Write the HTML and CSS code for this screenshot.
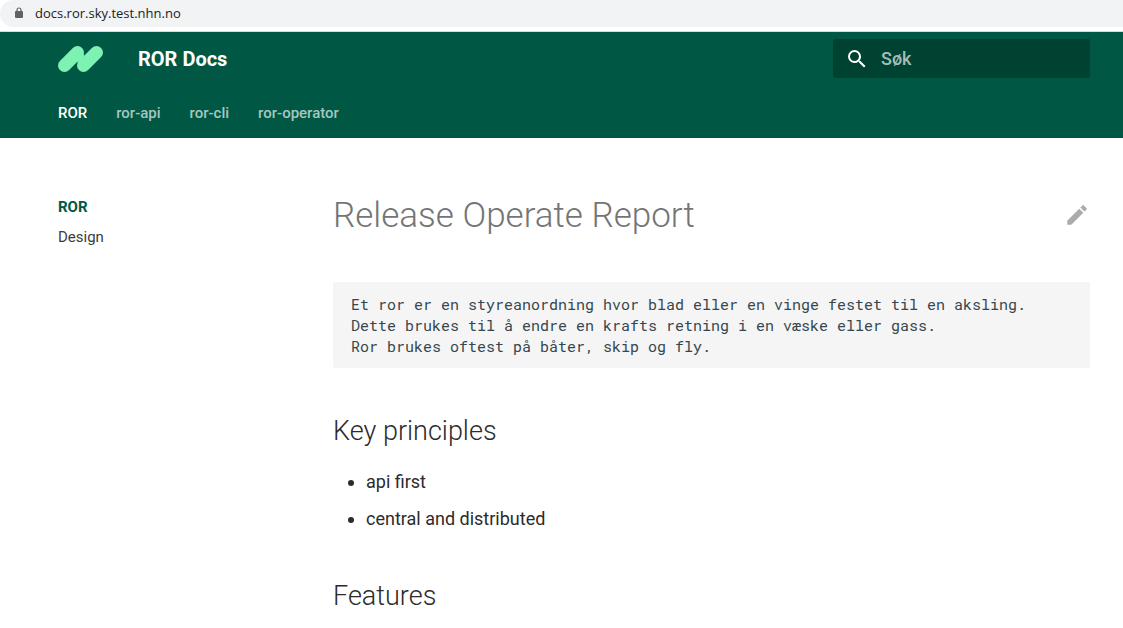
FILE: index.html
```html
<!DOCTYPE html>
<html lang="no">
<head>
<meta charset="utf-8">
<meta name="viewport" content="width=device-width, initial-scale=1">
<title>ROR Docs</title>
<link rel="stylesheet" href="styles.css">
</head>
<body>
<div class="browser-bar">
  <div class="address">
    <svg class="lock" viewBox="0 0 8 12" aria-hidden="true"><rect y="4" width="8" height="7" rx="1" fill="#5f6368"/><path d="M2 5V3a2 2 0 0 1 4 0v2" fill="none" stroke="#5f6368" stroke-width="1.2"/></svg>
    <span>docs.ror.sky.test.nhn.no</span>
  </div>
</div>
<header class="header">
  <div class="header-row">
    <a class="logo" href="#" aria-label="ROR Docs">
      <svg viewBox="0 0 45 28" aria-hidden="true"><path d="M6.500 20.500 19.500 7.500M25.500 20.500 38.500 7.500" fill="none" stroke="#7df2b2" stroke-width="13" stroke-linecap="round"/><path d="M26.200 9 25 15l-6 2.500 1-7.500z" fill="#7df2b2"/></svg>
    </a>
    <span class="site-title">ROR Docs</span>
    <form class="search" role="search">
      <svg class="search-icon" viewBox="0 0 24 24" aria-hidden="true"><path fill="#fff" d="M9.500 3A6.500 6.500 0 0 1 16 9.500c0 1.610-.590 3.090-1.560 4.230l.270.270h.790l5 5-1.500 1.500-5-5v-.790l-.270-.270A6.516 6.516 0 0 1 9.500 16 6.500 6.500 0 0 1 3 9.500 6.500 6.500 0 0 1 9.500 3m0 2C7 5 5 7 5 9.500S7 14 9.500 14 14 12 14 9.500 12 5 9.500 5Z"/></svg>
      <input class="search-input" type="text" placeholder="Søk" aria-label="Søk">
    </form>
  </div>
  <nav class="tabs" aria-label="Tabs">
    <a class="tab tab-active" href="#">ROR</a>
    <a class="tab" href="#">ror-api</a>
    <a class="tab" href="#">ror-cli</a>
    <a class="tab" href="#">ror-operator</a>
  </nav>
</header>
<div class="layout">
  <nav class="sidebar" aria-label="ROR">
    <a class="side-link side-active" href="#">ROR</a>
    <a class="side-link" href="#">Design</a>
  </nav>
  <main class="content">
    <div class="title-row">
      <h1 class="page-title">Release Operate Report</h1>
      <a class="edit" href="#" aria-label="Edit this page">
        <svg viewBox="0 0 24 24" aria-hidden="true"><path fill="#ababab" d="M20.710 7.040c.390-.390.390-1.040 0-1.410l-2.340-2.340c-.370-.390-1.020-.390-1.410 0l-1.840 1.830 3.750 3.750M3 17.250V21h3.750L17.810 9.930l-3.750-3.750L3 17.250Z"/></svg>
      </a>
    </div>
    <pre class="code"><code>Et ror er en styreanordning hvor blad eller en vinge festet til en aksling.
Dette brukes til å endre en krafts retning i en væske eller gass.
Ror brukes oftest på båter, skip og fly.</code></pre>
    <h2 class="section-title">Key principles</h2>
    <ul class="list">
      <li>api first</li>
      <li>central and distributed</li>
    </ul>
    <h2 class="section-title">Features</h2>
  </main>
</div>
</body>
</html>
```

FILE: styles.css
```css
* {
  box-sizing: border-box;
}

body {
  margin: 0;
  background: #fff;
  color: #2b2b2b;
  font-family: Roboto, "Liberation Sans", sans-serif;
  font-size: 18px;
}

a {
  color: inherit;
  text-decoration: none;
}

svg {
  display: block;
}

.browser-bar {
  height: 32px;
  border-bottom: 1px solid #d8dadc;
}

.address {
  display: flex;
  align-items: center;
  gap: 12px;
  height: 27px;
  padding: 0 0 2px 15px;
  border-radius: 14px 0 0 14px;
  background: #f1f3f4;
  color: #202124;
  font-family: "Open Sans", "Noto Sans", sans-serif;
  font-size: 13px;
}

.lock {
  width: 8px;
  height: 12px;
}

.header {
  padding: 0 33px 0 58px;
  background: #005844;
  color: #fff;
}

.header-row {
  display: flex;
  align-items: center;
  height: 53px;
}

.logo {
  width: 45px;
}

.site-title {
  flex: 1;
  margin-left: 35px;
  font-size: 20px;
  font-weight: 700;
}

.search {
  display: flex;
  align-items: center;
  gap: 12px;
  width: 257px;
  height: 39px;
  padding: 0 12px;
  border-radius: 2px;
  background: #004232;
}

.search-icon {
  flex: none;
  width: 24px;
  height: 24px;
}

.search-input {
  flex: 1;
  min-width: 0;
  padding: 0;
  border: 0;
  outline: 0;
  background: transparent;
  color: #fff;
  font: inherit;
  font-weight: 500;
}

.search-input::placeholder {
  color: #a6bdb7;
  opacity: 1;
}

.tabs {
  display: flex;
  align-items: center;
  gap: 29px;
  height: 53px;
  padding-top: 3px;
  font-size: 15px;
  font-weight: 500;
}

.tab {
  color: #a6c7bf;
}

.tab-active {
  color: #fff;
}

.layout {
  display: flex;
  padding: 53px 33px 0 58px;
}

.sidebar {
  display: flex;
  flex: none;
  flex-direction: column;
  gap: 10px;
  width: 275px;
  padding-top: 6px;
  font-size: 15px;
  line-height: 20px;
}

.side-link {
  color: #3c3c3c;
}

.side-active {
  color: #005844;
  font-weight: 700;
}

.content {
  flex: 1;
  min-width: 0;
}

.title-row {
  display: flex;
  align-items: center;
  justify-content: space-between;
  margin-bottom: 41px;
}

.page-title {
  margin: 0;
  color: #757575;
  font-size: 35px;
  font-weight: 300;
  line-height: 50px;
}

.edit {
  width: 26px;
  padding-bottom: 2px;
}

.code {
  margin: 0;
  padding: 12px 18px 11px;
  overflow: auto;
  border-radius: 2px;
  background: #f5f5f5;
  color: #36464e;
  font-family: "Roboto Mono", "DejaVu Sans Mono", monospace;
  font-size: 15px;
  line-height: 21px;
}

.code code {
  font: inherit;
}

.section-title {
  margin: 44px 0 18px;
  font-size: 27px;
  font-weight: 300;
  line-height: 38px;
}

.list {
  display: grid;
  gap: 9px;
  margin: 0;
  padding-left: 33px;
  line-height: 28px;
}
```
